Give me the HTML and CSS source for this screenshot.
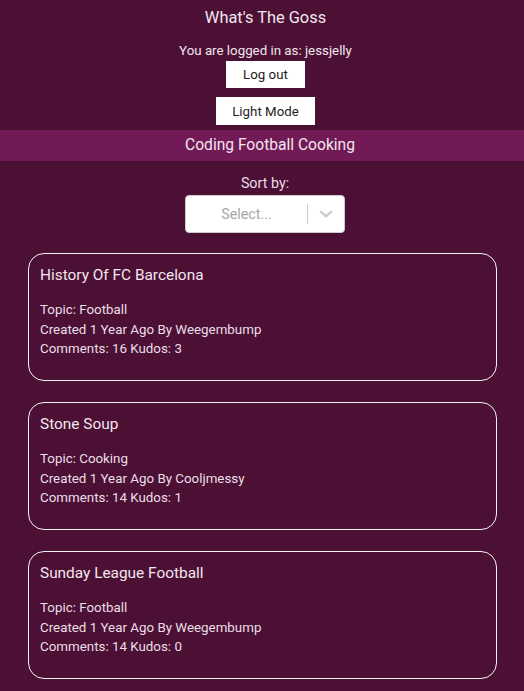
FILE: index.html
```html
<!DOCTYPE html>
<html>
<head>
<meta charset="utf-8">
<link rel="stylesheet" href="styles.css">
</head>
<body>
<header class="header">
  <h1 class="site-title">What's The Goss</h1>
  <p class="logged-in">You are logged in as: jessjelly</p>
  <button class="btn btn-logout">Log out</button>
  <button class="btn btn-mode">Light Mode</button>
</header>
<nav class="topics">Coding Football Cooking</nav>
<section class="sort">
  <label class="sort-label">Sort by:</label>
  <div class="select">
    <span class="select-placeholder">Select...</span>
    <span class="select-sep"></span>
    <span class="select-arrow">
      <svg width="20" height="20" viewBox="0 0 20 20"><path d="M4.8 7.6 L10 12.4 L15.2 7.6" fill="none" stroke="#cccccc" stroke-width="2.2" stroke-linecap="round" stroke-linejoin="round"/></svg>
    </span>
  </div>
</section>
<main class="articles">
  <article class="card">
    <h2 class="card-title">History Of FC Barcelona</h2>
    <p class="card-line">Topic: Football</p>
    <p class="card-line">Created 1 Year Ago By Weegembump</p>
    <p class="card-line">Comments: 16 Kudos: 3</p>
  </article>
  <article class="card">
    <h2 class="card-title">Stone Soup</h2>
    <p class="card-line">Topic: Cooking</p>
    <p class="card-line">Created 1 Year Ago By Cooljmessy</p>
    <p class="card-line">Comments: 14 Kudos: 1</p>
  </article>
  <article class="card">
    <h2 class="card-title">Sunday League Football</h2>
    <p class="card-line">Topic: Football</p>
    <p class="card-line">Created 1 Year Ago By Weegembump</p>
    <p class="card-line">Comments: 14 Kudos: 0</p>
  </article>
</main>
</body>
</html>
```
FILE: styles.css
```css
html, body {
  margin: 0;
  padding: 0;
  background: #4d1035;
}
body {
  font-family: Roboto, "Liberation Sans", sans-serif;
  color: #f0e6ee;
}
.header {
  display: flex;
  flex-direction: column;
  align-items: center;
  padding-top: 8px;
  padding-left: 7px;
}
.site-title {
  margin: 0;
  font-size: 16.4px;
  font-weight: 400;
  line-height: 20px;
}
.logged-in {
  margin: 14px 0 0;
  font-size: 13.3px;
  line-height: 17px;
}
.btn {
  font-family: Roboto, "Liberation Sans", sans-serif;
  font-size: 13.3px;
  color: #222;
  background: #ffffff;
  border: none;
  padding: 0;
  height: 27px;
}
.btn-logout {
  width: 79px;
  margin-top: 2px;
}
.btn-mode {
  width: 99px;
  height: 28px;
  margin-top: 9px;
}
.topics {
  margin-top: 5px;
  background: #711a56;
  height: 31px;
  line-height: 31px;
  text-align: center;
  font-size: 15.6px;
  color: #f3e6ef;
  padding-left: 16px;
}
.sort {
  display: flex;
  flex-direction: column;
  align-items: center;
  padding-top: 13px;
  padding-left: 6px;
}
.sort-label {
  font-size: 14.3px;
  line-height: 18px;
  color: #e8dde5;
}
.select {
  margin-top: 3px;
  width: 158px;
  height: 36px;
  background: #fff;
  border: 1px solid #cccccc;
  border-radius: 4px;
  display: flex;
  align-items: center;
}
.select-placeholder {
  flex: 1;
  text-align: center;
  font-size: 14.3px;
  color: #a8a8a8;
}
.select-sep {
  width: 1px;
  height: 20px;
  background: #cccccc;
}
.select-arrow {
  width: 36px;
  display: flex;
  justify-content: center;
  align-items: center;
}
.articles {
  display: flex;
  flex-direction: column;
  gap: 21px;
  padding: 20px 27px 20px 28px;
}
.card {
  box-sizing: border-box;
  border: 1px solid #f2f2f2;
  border-radius: 16px;
  height: 128px;
  padding: 11px 11px 0;
}
.card-title {
  margin: 0 0 15px;
  font-size: 15.4px;
  font-weight: 400;
  line-height: 20px;
  color: #f3e6ef;
}
.card-line {
  margin: 0;
  font-size: 13.35px;
  line-height: 19.5px;
  color: #eadfe7;
}
```
